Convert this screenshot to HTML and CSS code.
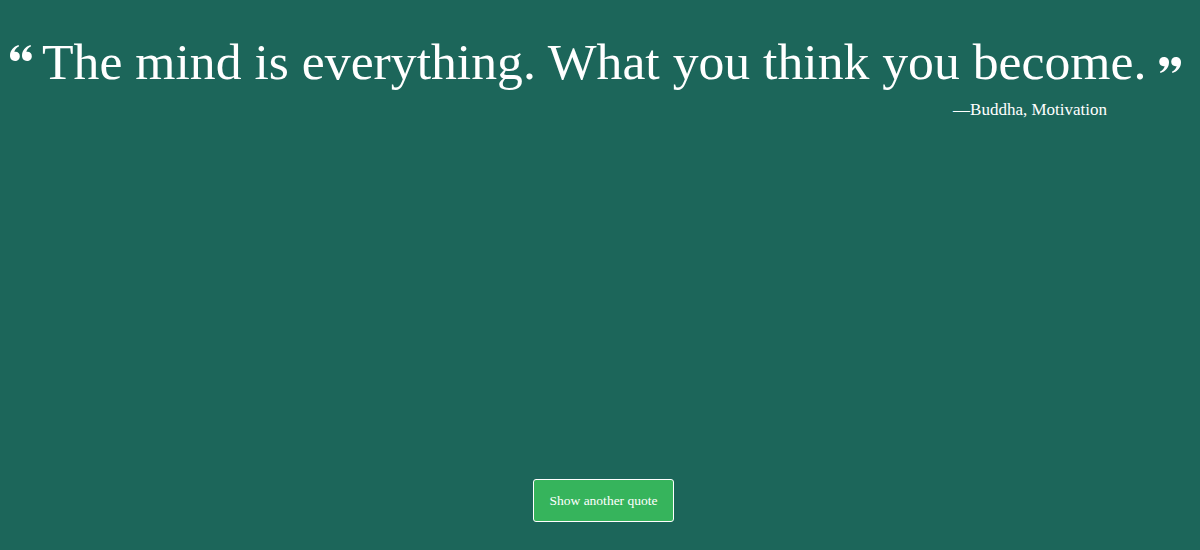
FILE: index.html
```html
<!DOCTYPE html>
<html>
<head>
<meta charset="utf-8">
<link rel="stylesheet" href="styles.css">
</head>
<body>
<main class="page">
  <section class="quote-box">
    <h1 class="quote">
      <svg class="qmark open" viewBox="0 0 22 16" width="22" height="16"><path d="M5 16C2 16 0 13.8 0 10.8 0 5.5 3.5 1.5 8.5 0L9.1 1.3C6 2.8 4.6 5 4.4 7 4.7 6.9 5.1 6.8 5.5 6.8 8 6.8 9.8 8.6 9.8 11.2 9.8 14 7.8 16 5 16ZM17 16C14 16 12 13.8 12 10.8 12 5.5 15.5 1.5 20.5 0L21.1 1.3C18 2.8 16.6 5 16.4 7 16.7 6.9 17.1 6.8 17.5 6.8 20 6.8 21.8 8.6 21.8 11.2 21.8 14 19.8 16 17 16Z" fill="#fff"/></svg>
      <span class="text">The mind is everything. What you think you become.</span>
      <svg class="qmark close" viewBox="0 0 22 16" width="22" height="16"><g transform="rotate(180 11 8)"><path d="M5 16C2 16 0 13.8 0 10.8 0 5.5 3.5 1.5 8.5 0L9.1 1.3C6 2.8 4.6 5 4.4 7 4.7 6.9 5.1 6.8 5.5 6.8 8 6.8 9.8 8.6 9.8 11.2 9.8 14 7.8 16 5 16ZM17 16C14 16 12 13.8 12 10.8 12 5.5 15.5 1.5 20.5 0L21.1 1.3C18 2.8 16.6 5 16.4 7 16.7 6.9 17.1 6.8 17.5 6.8 20 6.8 21.8 8.6 21.8 11.2 21.8 14 19.8 16 17 16Z" fill="#fff"/></g></svg>
    </h1>
    <p class="author">—Buddha, Motivation</p>
  </section>
  <div class="actions">
    <button class="btn">Show another quote</button>
  </div>
</main>
</body>
</html>
```

FILE: styles.css
```css
html, body {
  margin: 0;
  padding: 0;
  height: 100%;
}
body {
  background: #1c665a;
  color: #fff;
  font-family: "Liberation Serif", "DejaVu Serif", serif;
}
.page {
  height: 550px;
  display: flex;
  flex-direction: column;
  justify-content: space-between;
  box-sizing: border-box;
  padding-bottom: 28px;
}
.quote-box {
  padding-top: 27px;
}
.quote {
  margin: 0;
  display: flex;
  align-items: flex-start;
  padding-left: 10px;
  font-weight: normal;
  font-size: 51.7px;
  line-height: 70px;
  white-space: nowrap;
}
.qmark {
  flex-shrink: 0;
}
.qmark.open {
  margin-top: 18px;
  margin-right: 10px;
}
.qmark.close {
  margin-top: 30px;
  margin-left: 13px;
}
.author {
  margin: 2px 0 0;
  text-align: right;
  padding-right: 93px;
  font-size: 17px;
  line-height: 22px;
}
.actions {
  display: flex;
  justify-content: center;
}
.btn {
  margin-left: 7px;
  width: 141px;
  height: 43px;
  background: #36b45c;
  color: #fff;
  border: 1px solid #fff;
  border-radius: 3px;
  font-family: "Liberation Serif", "DejaVu Serif", serif;
  font-size: 13.5px;
  cursor: pointer;
}
```
